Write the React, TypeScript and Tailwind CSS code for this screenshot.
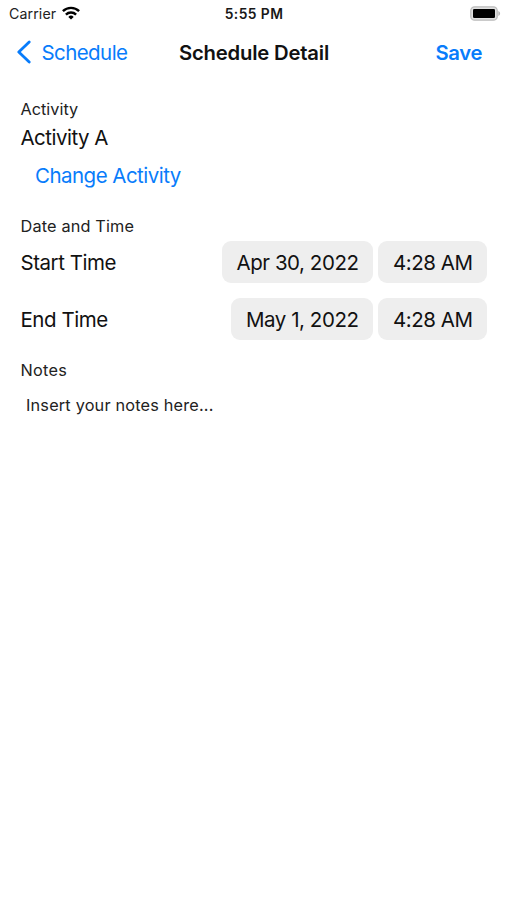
import React from 'react';

function StatusBar() {
  return (
    <div className="grid h-7 grid-cols-3 items-center pr-[6px] pl-[9px]">
      <div className="-mt-px flex items-center gap-[6px] text-[14.2px] tracking-[0.1px] text-[#222222]">
        <span>Carrier</span>
        <svg className="-mt-px" width="18" height="14" viewBox="0 0 18 14" fill="none" stroke="black" strokeWidth="2.4">
          <path d="M.9 5.2a11.5 11.5 0 0 1 16.2 0" />
          <path d="M3.9 8.6a7.2 7.2 0 0 1 10.2 0" />
          <path d="M9 13.6L6.3 10.9a3.9 3.9 0 0 1 5.4 0z" fill="black" stroke="none" />
        </svg>
      </div>
      <div className="pt-px pr-[2px] text-center text-[13.8px] font-semibold tracking-[0.45px] text-[#181818]">5:55 PM</div>
      <div className="-mt-[2px] flex justify-end">
        <svg width="31" height="15" viewBox="0 0 31 15">
          <rect x="0.8" y="0.8" width="26.4" height="13.4" rx="3.8" fill="#e0e0e0" stroke="#bcbcbc" strokeWidth="1.3" />
          <rect x="3" y="3" width="22" height="9" rx="1.3" />
          <path d="M28.3 5c2.4.9 2.4 4.1 0 5z" fill="#b7b7b7" />
        </svg>
      </div>
    </div>
  );
}

function TimeRow({ label, date, time }: { label: string; date: string; time: string }) {
  return (
    <div className="flex h-[42px] items-center gap-[5px] tracking-[-0.45px]">
      <span className="mr-auto pt-[2px]">{label}</span>
      <span className="flex h-[42px] items-center rounded-[9px] bg-[#eeeeee] pt-[2px] pr-[14.5px] pl-[14.5px]">{date}</span>
      <span className="flex h-[42px] w-[109px] items-center rounded-[9px] bg-[#eeeeee] pt-[2px] pl-[15px]">{time}</span>
    </div>
  );
}

export default function App() {
  return (
    <div className="h-[900px] w-[507px] overflow-hidden bg-white font-['Inter',sans-serif] text-[20.5px] whitespace-nowrap text-[#111111]">
      <StatusBar />
      <header className="grid h-[49px] grid-cols-[1fr_auto_1fr] items-center pr-[16px] pl-[17px]">
        <div className="flex items-center gap-[9.5px] tracking-[-0.58px] text-[#087cfb]">
          <svg className="-mt-px" width="15" height="24" viewBox="0 0 15 24" fill="none" stroke="currentColor" strokeWidth="2.8" strokeLinecap="round" strokeLinejoin="round">
            <path d="M12.2 2L1.8 12l10.4 10" />
          </svg>
          <span className="pt-[2px]">Schedule</span>
        </div>
        <h1 className="pt-[2px] text-[20.3px] font-semibold tracking-[-0.2px]">Schedule Detail</h1>
        <span className="pt-[2px] pr-[9px] text-right text-[20.3px] font-semibold tracking-[-0.4px] text-[#087cfb]">Save</span>
      </header>
      <main className="pt-[22px] pr-[20px] pl-[20.5px]">
        <div className="h-5 text-[16.3px] leading-5 tracking-[0px] text-[#222222]">Activity</div>
        <div className="mt-[5px] h-7 leading-7 tracking-[-0.52px]">Activity A</div>
        <div className="mt-[10px] h-7 pl-[14.5px] leading-7 tracking-[-0.53px] text-[#087cfb]">Change Activity</div>
        <div className="mt-[26px] h-5 text-[16.3px] leading-5 tracking-[0.15px] text-[#222222]">Date and Time</div>
        <div className="mt-[5px] flex flex-col gap-[15px]">
          <TimeRow label="Start Time" date="Apr 30, 2022" time="4:28 AM" />
          <TimeRow label="End Time" date="May 1, 2022" time="4:28 AM" />
        </div>
        <div className="mt-5 h-5 text-[16.3px] leading-5 tracking-[0.25px] text-[#222222]">Notes</div>
        <div className="mt-[15px] h-5 pl-[5.5px] text-[16.3px] leading-5 tracking-[0.18px] text-[#222222]">Insert your notes here...</div>
      </main>
    </div>
  );
}
